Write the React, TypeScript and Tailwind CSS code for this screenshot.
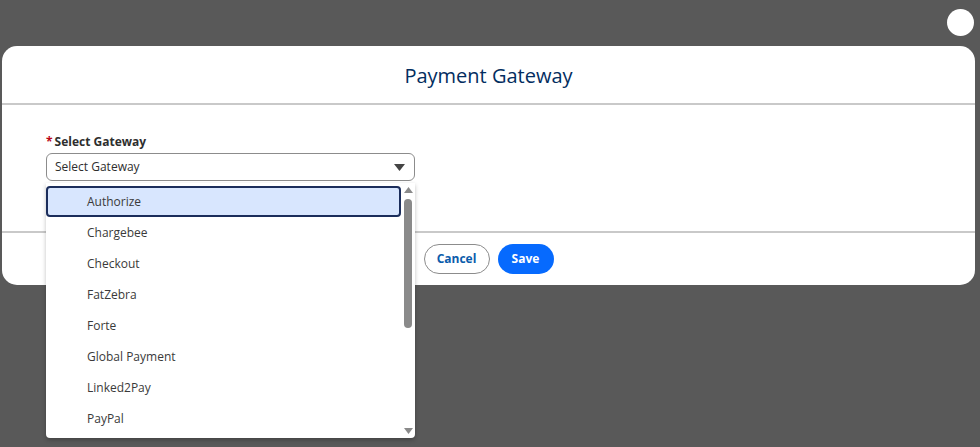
import React from 'react';

const gateways = [
  'Authorize',
  'Chargebee',
  'Checkout',
  'FatZebra',
  'Forte',
  'Global Payment',
  'Linked2Pay',
  'PayPal',
];

export default function App() {
  return (
    <div
      className="relative h-[447px] w-[980px] overflow-hidden bg-[#595959] pt-[46px] pl-[2px]"
      style={{ fontFamily: '"Open Sans", "Noto Sans", sans-serif' }}
    >
      {/* close circle */}
      <div className="absolute right-[6px] top-[9px] h-[27px] w-[27px] rounded-full bg-white" />

      {/* Modal */}
      <div className="w-[973px] rounded-[15px] bg-white">
        {/* Header */}
        <div className="flex h-[59px] items-center justify-center border-b-2 border-[#c9c9c9] pt-[2px]">
          <h2 className="text-[20px] leading-none text-[#032d60]">Payment Gateway</h2>
        </div>

        {/* Body */}
        <div className="h-[128px] border-b-2 border-[#c9c9c9] pl-[44px] pt-[29px]">
          <div className="flex items-center text-[12px] font-bold leading-[16px] text-[#2e2e2e]">
            <span className="mr-[2px] text-[#ba0517]">*</span>
            Select Gateway
          </div>
          <div className="relative mt-[3px] w-[369px]">
            <div className="flex h-[28px] items-center justify-between rounded-[6px] border border-[#8c8c8c] pl-[8px] pr-[9px] text-[12px] text-[#2e2e2e]">
              <span>Select Gateway</span>
              <svg width="11" height="7" viewBox="0 0 11 7">
                <path d="M0 0 L11 0 L5.5 7 Z" fill="#444" />
              </svg>
            </div>

            {/* Dropdown list */}
            <div className="absolute left-0 top-[30px] z-10 flex h-[255px] w-[369px] overflow-hidden rounded-b-[4px] bg-white shadow-[0_2px_4px_rgba(0,0,0,0.25)]">
              <div className="flex-1 pt-[3px]">
                {gateways.map((g, i) => (
                  <div
                    key={g}
                    className={
                      i === 0
                        ? 'flex h-[31px] items-center rounded-[4px] border-2 border-[#1b2d5b] bg-[#d8e6fe] pl-[39px] text-[12px] text-[#3a3a3a]'
                        : 'flex h-[31px] items-center pl-[41px] text-[12px] text-[#3a3a3a]'
                    }
                  >
                    {g}
                  </div>
                ))}
              </div>
              {/* scrollbar */}
              <div className="flex w-[14px] flex-col items-center pt-[4px]">
                <svg width="9" height="6" viewBox="0 0 9 6">
                  <path d="M4.5 0 L9 6 L0 6 Z" fill="#8a8a8a" />
                </svg>
                <div className="mt-[6px] h-[129px] w-[8px] rounded-full bg-[#8a8a8a]" />
                <div className="flex-1" />
                <svg width="9" height="6" viewBox="0 0 9 6" className="mb-[4px]">
                  <path d="M0 0 L9 0 L4.5 6 Z" fill="#8a8a8a" />
                </svg>
              </div>
            </div>
          </div>
        </div>

        {/* Footer */}
        <div className="flex h-[52px] items-center justify-center gap-[8px] pb-[1px]">
          <button className="h-[30px] w-[66px] rounded-full border border-[#8c8c8c] bg-white text-[12px] font-bold text-[#0b5cab]">
            Cancel
          </button>
          <button className="h-[30px] w-[56px] rounded-full bg-[#066afe] text-[12px] font-bold text-white">
            Save
          </button>
        </div>
      </div>
    </div>
  );
}
